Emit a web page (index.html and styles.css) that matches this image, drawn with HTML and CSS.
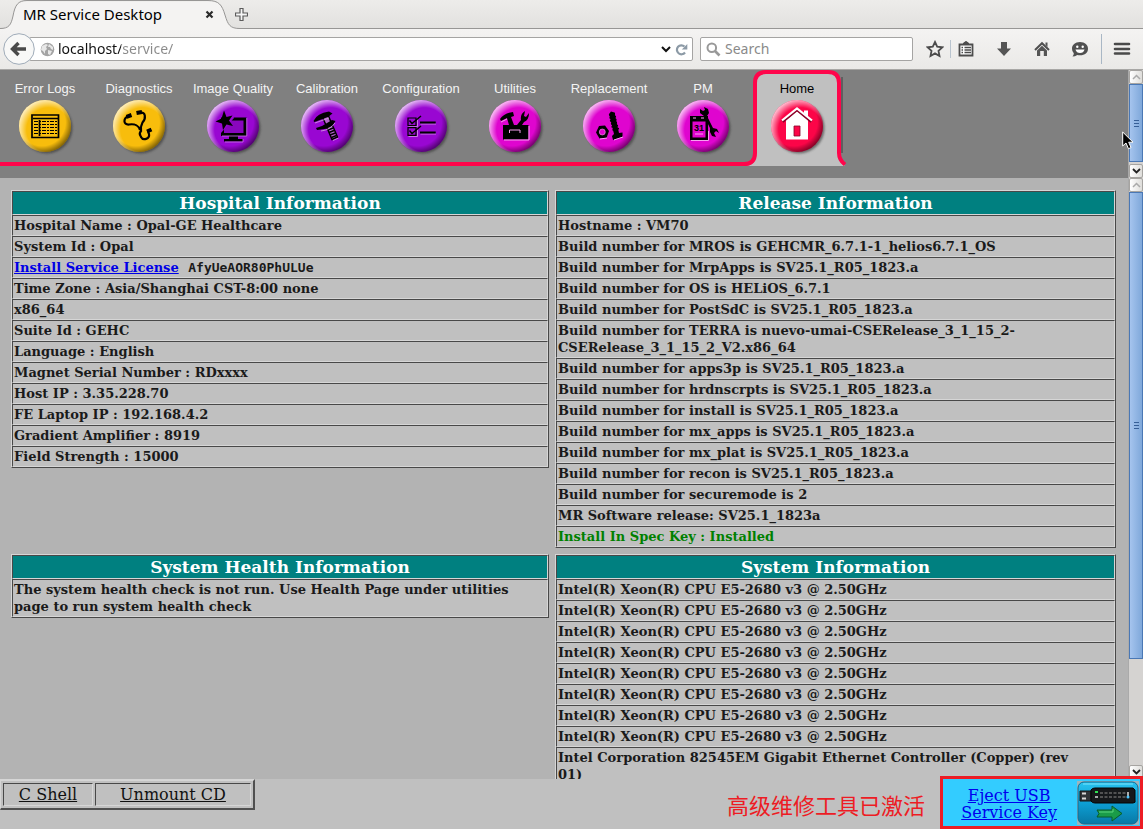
FILE: index.html
```html
<!DOCTYPE html>
<html lang="en">
<head>
<meta charset="utf-8">
<title>MR Service Desktop</title>
<link rel="stylesheet" href="styles.css">
</head>
<body>
<svg class="defs" aria-hidden="true">
  <defs>
    <radialGradient id="shine" cx="0.57" cy="0.57" r="0.64"><stop offset="0.66" stop-color="#fff" stop-opacity="0"/><stop offset="1" stop-color="#fff" stop-opacity=".95"/></radialGradient>
    <radialGradient id="shade" cx="0.44" cy="0.43" r="0.61"><stop offset="0.74" stop-color="#000" stop-opacity="0"/><stop offset="1" stop-color="#000" stop-opacity=".55"/></radialGradient>
    <filter id="soft"><feGaussianBlur stdDeviation="1.2"/></filter>
    <g id="gloss"><circle cx="30" cy="26" r="26" fill="url(#shade)"/><circle cx="30" cy="26" r="26" fill="url(#shine)"/></g>
    <circle id="drop" cx="32" cy="28" r="25.5" fill="#333" opacity=".6" filter="url(#soft)"/>
  </defs>
</svg>

<header class="tabstrip">
  <svg class="tab-shape" viewBox="0 0 240 29" aria-hidden="true"><path d="M0 28.500C9 28.500 11 25 13 16C15 5 18 1.500 27 1.500H208C219 1.500 222 5 225 15C228 25 230 28.500 240 28.500V29H0z" fill="#f4f3f2"/><path d="M0 28.500C9 28.500 11 25 13 16C15 5 18 .500 27 .500H208C219 .500 222 5 225 15C228 25 230 28.500 240 28.500" fill="none" stroke="#979695"/></svg>
  <span class="tab-title">MR Service Desktop</span>
  <button class="tab-close" aria-label="Close tab"><svg width="9" height="9" viewBox="0 0 9 9"><path d="M1.500 1.500L7.500 7.500M7.500 1.500L1.500 7.500" stroke="#2b2b2b" stroke-width="2.200"/></svg></button>
  <button class="tab-new" aria-label="New tab"><svg width="13" height="13" viewBox="0 0 13 13"><path d="M5 .500H8V5H12.500V8H8V12.500H5V8H.500V5H5z" fill="#f6f6f6" stroke="#5b5b5b" stroke-width="1.200"/></svg></button>
</header>

<div class="toolbar">
  <button class="back" aria-label="Back"><svg width="32" height="32" viewBox="0 0 32 32"><circle cx="16" cy="16" r="15.300" fill="#f8f8f7" stroke="#9fabb8"/><path d="M15.500 10L9.500 16L15.500 22M10 16H23" fill="none" stroke="#4a4a4a" stroke-width="3.400"/></svg></button>
  <div class="urlbar">
    <svg width="15" height="15" viewBox="0 0 15 15" aria-hidden="true"><circle cx="7.500" cy="7.500" r="6.800" fill="#a4a4a4"/><path d="M2 4L6 2L8 3L6 5L7 7L5 9L5 12L3 9L1 8zM9 2L13 5L13 8L11 7L10 5L8 5zM8 8L12 9L10 13L8 12z" fill="#e8e8e8"/></svg>
    <input class="url" aria-label="Address" value="localhost/service/">
    <button aria-label="History"><svg width="12" height="8" viewBox="0 0 12 8"><path d="M2 2L6 6L10 2" fill="none" stroke="#111" stroke-width="2"/></svg></button>
    <button aria-label="Reload"><svg width="13" height="13" viewBox="0 0 13 13"><path d="M10 9.500A4.500 4.500 0 1 1 9.500 3.500" fill="none" stroke="#8c9aa6" stroke-width="2.200"/><path d="M12.300 1V6.500H6.800z" fill="#8c9aa6"/></svg></button>
  </div>
  <div class="searchbar">
    <svg width="15" height="15" viewBox="0 0 15 15" aria-hidden="true"><circle cx="5.800" cy="5.800" r="4.300" fill="none" stroke="#999" stroke-width="2"/><path d="M9 9L13.500 13.500" stroke="#999" stroke-width="2.600"/></svg>
    <input class="search" aria-label="Search" placeholder="Search">
  </div>
  <div class="tools">
    <button aria-label="Bookmark"><svg width="18" height="18" viewBox="0 0 18 18"><path d="M9 2L11.200 6.700L16.300 7.300L12.500 10.800L13.500 16L9 13.400L4.500 16L5.500 10.800L1.700 7.300L6.800 6.700z" fill="none" stroke="#4c4c4c" stroke-width="1.800"/></svg></button>
    <button class="ruled" aria-label="Bookmarks list"><svg width="18" height="18" viewBox="0 0 18 18"><path d="M2.500 4.500H15.500V15.500H2.500z" fill="#fff" stroke="#4c4c4c" stroke-width="1.800"/><path d="M6.500 4V3Q9 0 11.500 3V4z" fill="#4c4c4c" stroke="#4c4c4c"/><path d="M4.500 7.500H6M4.500 10H6M4.500 12.500H6M7.500 7.500H14M7.500 10H14M7.500 12.500H14" stroke="#4c4c4c" stroke-width="1.400"/></svg></button>
    <button aria-label="Downloads"><svg width="18" height="18" viewBox="0 0 18 18"><path d="M6 2H12V8.500H16L9 16L2 8.500H6z" fill="#555"/></svg></button>
    <button aria-label="Home page"><svg width="18" height="18" viewBox="0 0 18 18"><path d="M2 10L9 3.200L16 10" fill="none" stroke="#4f4f4f" stroke-width="2"/><path d="M4 10.500L9 5.800L14 10.500V16H10.800V11H7.200V16H4zM12.500 2.500H14.500V7L12.500 5z" fill="#555"/></svg></button>
    <button aria-label="Chat"><svg width="18" height="18" viewBox="0 0 18 18"><path d="M9 2C14 2 17 5 17 8.700C17 12.500 14 15.300 9 15.300Q7.500 15.300 6.300 15Q4 16.500 1.500 16.500Q3 14.800 2.800 13.200Q1 11.500 1 8.700C1 5 4 2 9 2z" fill="#505050"/><circle cx="6.300" cy="6.700" r="1.200" fill="#fff"/><circle cx="11.700" cy="6.700" r="1.200" fill="#fff"/><path d="M4.500 9.500H13.500Q12.500 13 9 13T4.500 9.500z" fill="#fff"/></svg></button>
    <button class="menu" aria-label="Menu"><svg width="18" height="18" viewBox="0 0 18 18"><path d="M2 4H16M2 9H16M2 13.500H16" stroke="#4a4a4a" stroke-width="2.600" stroke-linecap="round"/></svg></button>
  </div>
</div>

<div class="frame nav-frame">
  <nav class="nav">
    <a class="item" href="#"><span>Error Logs</span><svg width="60" height="56" viewBox="0 0 60 56"><use href="#drop"/><circle cx="30" cy="26" r="26" fill="#f8bd0c"/><use href="#gloss"/><path d="M17 15H43.500V37.500H17zM18 18.500H43M24.500 20V36" fill="none" stroke="#000" stroke-width="1.700"/><path d="M19 21.500H42M19 24.500H42M19 27.500H42M19 30.500H42M19 33.500H42" stroke="#000" stroke-width="1.200" stroke-dasharray="4 1 2 1"/></svg></a>
    <a class="item" href="#"><span>Diagnostics</span><svg width="60" height="56" viewBox="0 0 60 56"><use href="#drop"/><circle cx="30" cy="26" r="26" fill="#f8bd0c"/><use href="#gloss"/><g fill="none" stroke="#000" stroke-width="2.200"><path d="M19.700 16C14 18 14 25 20 24.500C26 23.500 30 26 31 30M31 13C37 11 37 19 33.500 22.500Q31.500 26 32 31C29 34 32 36 32 37C34 41 41 39 40 34C39 32 39 31 42 30"/><path d="M17.500 16.800L22.500 15M27.500 13L33 12M38 31.500L42.500 29.500" stroke-width="4"/></g></svg></a>
    <a class="item" href="#"><span>Image Quality</span><svg width="60" height="56" viewBox="0 0 60 56"><use href="#drop"/><circle cx="30" cy="26" r="26" fill="#9907d2"/><use href="#gloss"/><path d="M19.500 19H42V34.500H19.500z" fill="#8906be" stroke="#000" stroke-width="3"/><path d="M13 29L28 12L31 18L18 33z" fill="#9907d2"/><path d="M21 10.500L23.500 17L29.500 15.500L26 20.500L30 26L23.500 24.500L20 30L19 23.500L12.500 21.500L18.500 18.500z"/><path d="M26 36H35V39H40V41.500H21V39H26z"/><path d="M43.800 18V36H19M40 39V42H22" fill="none" stroke="#c97be8" stroke-width=".8"/></svg></a>
    <a class="item" href="#"><span>Calibration</span><svg width="60" height="56" viewBox="0 0 60 56"><use href="#drop"/><circle cx="30" cy="26" r="26" fill="#9907d2"/><use href="#gloss"/><path d="M25.500 17L31 15L40.500 37L35 39.500z" fill="#b465cc" stroke="#000" stroke-width="1.500"/><path d="M16.500 21Q20 13 32 11.500L35.500 13.500L31 17L17.500 22zM19 28L25 26L35 20L38.500 21Q35 29 24 29.500L20 30z"/><path d="M31 30L36 28M32 32.500L37 30.500M33 35L38.500 33M34.500 37.500L39.500 35.500" stroke="#000" stroke-width="1.400"/><path d="M18 23L32 18M24 31Q33 30 38 23M41.500 38L36 40.500" stroke="#d6a1e3" stroke-width=".8" fill="none"/></svg></a>
    <a class="item" href="#"><span>Configuration</span><svg width="60" height="56" viewBox="0 0 60 56"><use href="#drop"/><circle cx="30" cy="26" r="26" fill="#9907d2"/><use href="#gloss"/><path d="M29.500 24H45M29.500 34H45M17.500 26.700H26.500V18M17.500 36.500H26.500V28" fill="none" stroke="#d597e8" stroke-width=".8"/><path d="M17 18H25V25.500H17zM17 27.700H25V35.300H17z" fill="none" stroke="#000" stroke-width="1.200"/><path d="M18.500 20.500L21 23.500L30 16M18.500 30.500L21 33.500L30 26" fill="none" stroke="#000" stroke-width="1.400"/><path d="M29 22.500H44.700M29 32.500H44.700" stroke="#000" stroke-width="2"/></svg></a>
    <a class="item" href="#"><span>Utilities</span><svg width="60" height="56" viewBox="0 0 60 56"><use href="#drop"/><circle cx="30" cy="26" r="26" fill="#df05cf"/><use href="#gloss"/><path d="M18 25H43.500V39.500H18z"/><path d="M15 19Q19 13 28 12L29 16L26 17L29 25L24 25L22 18L16 21zM32 25L36 20Q35 14 40 11L39 16L41 17L44 13Q44 20 39 22L37 25z"/><path d="M24.500 33V30H35V33M19 40H44V26M16 22L22 19" fill="none" stroke="#f6a1ef"/></svg></a>
    <a class="item" href="#"><span>Replacement</span><svg width="60" height="56" viewBox="0 0 60 56"><use href="#drop"/><circle cx="30" cy="26" r="26" fill="#df05cf"/><use href="#gloss"/><path d="M20 26L26 25.500L30 31L27.500 38L20.500 38.500L17 32.500z"/><circle cx="23.300" cy="32" r="3" fill="#df05cf" stroke="#f6a1ef" stroke-width=".6"/><path d="M30 14L32 11.500L35.500 12.500L40 33L43.500 32.500L43.500 37L34 40L33 36L35 34z"/><path d="M30 15L36 13.500M30.500 18L37 16.500M31 21L37.500 19.500M32 24L38 22.500M32.500 27L39 25.500M33.500 30L40 28.500" stroke="#000" stroke-width="1.500"/><path d="M35 40L44 37M21 39L28 38" stroke="#f6a1ef"/></svg></a>
    <a class="item" href="#"><span>PM</span><svg width="60" height="56" viewBox="0 0 60 56"><use href="#drop"/><circle cx="30" cy="26" r="26" fill="#df05cf"/><use href="#gloss"/><path d="M17 16H35V40H17zM19.500 21.500V37.500H32.500V21.500z" fill-rule="evenodd"/><path d="M20 18H23M28 18H31M22 34H30M35.500 31V40.500H18" fill="none" stroke="#f6a1ef"/><text class="date" x="21" y="31">31</text><path d="M27 9L30 11L32 10L31 7L35 9L36 13L34 16L40 28L44 29L46 33L43 31L41 33L43 37L39 36L37 32L37 28L31 16L27 13z"/></svg></a>
    <a class="item current" href="#"><svg class="tab-outline" width="96" height="96" viewBox="0 0 96 96" aria-hidden="true"><path d="M92 7V83" stroke="#5f5f5f" stroke-width="2"/><path d="M-4 96C4 95 6 90 6 84V12Q6 3 15 3H79Q89 3 89 12V84Q89 93 95 96z" fill="#c0c0c0"/><path d="M-6 94C2 94 5 90 5 83V13Q5 2 16 2H78Q89 2 89 13V83Q89 90 95 94.500" fill="none" stroke="#ff054b" stroke-width="4"/></svg><span>Home</span><svg width="60" height="56" viewBox="0 0 60 56"><use href="#drop"/><circle cx="30" cy="26" r="26" fill="#fc0548"/><use href="#gloss"/><path d="M37 17V10.500H41V21z" fill="#fff"/><path d="M19 20L30 11L41 20V39.500H19z" fill="#fff"/><path d="M15.500 21.500L30 9.500L44.500 21.500" fill="none" stroke="#8b0028" stroke-width="3"/><path d="M15 20.500L30 8.500L45 20.500" fill="none" stroke="#fff" stroke-width="2.200"/><path d="M27 26H33V36H27z" fill="#fc0548" stroke="#870329" stroke-width=".8"/></svg></a>
  </nav>
  <div class="scrollbar">
    <button aria-label="Scroll up"><svg width="9" height="6" viewBox="0 0 9 6"><path d="M1 5L4.500 1.500L8 5" fill="none" stroke="#aaa" stroke-width="1.500"/></svg></button>
    <div class="thumb thumb-nav"></div>
    <div class="trough"></div>
    <button aria-label="Scroll down"><svg width="9" height="6" viewBox="0 0 9 6"><path d="M1 1L4.500 4.500L8 1" fill="none" stroke="#222" stroke-width="1.800"/></svg></button>
  </div>
  <svg class="pointer" width="12" height="19" viewBox="0 0 12 19" aria-hidden="true"><path d="M.700 1V15L4 12L6.500 17.800L9 16.500L6.700 11.200H11z" fill="#000" stroke="#fff"/></svg>
</div>

<div class="frame main-frame">
  <main class="panels">
    <table class="info">
      <tr><th>Hospital Information</th></tr>
      <tr><td>Hospital Name : Opal-GE Healthcare</td></tr>
      <tr><td>System Id : Opal</td></tr>
      <tr><td><a href="#">Install Service License</a> <code>AfyUeAOR80PhULUe</code></td></tr>
      <tr><td>Time Zone : Asia/Shanghai CST-8:00 none</td></tr>
      <tr><td>x86_64</td></tr>
      <tr><td>Suite Id : GEHC</td></tr>
      <tr><td>Language : English</td></tr>
      <tr><td>Magnet Serial Number : RDxxxx</td></tr>
      <tr><td>Host IP : 3.35.228.70</td></tr>
      <tr><td>FE Laptop IP : 192.168.4.2</td></tr>
      <tr><td>Gradient Amplifier : 8919</td></tr>
      <tr><td>Field Strength : 15000</td></tr>
    </table>
    <table class="info">
      <tr><th>Release Information</th></tr>
      <tr><td>Hostname : VM70</td></tr>
      <tr><td>Build number for MROS is GEHCMR_6.7.1-1_helios6.7.1_OS</td></tr>
      <tr><td>Build number for MrpApps is SV25.1_R05_1823.a</td></tr>
      <tr><td>Build number for OS is HELiOS_6.7.1</td></tr>
      <tr><td>Build number for PostSdC is SV25.1_R05_1823.a</td></tr>
      <tr><td>Build number for TERRA is nuevo-umai-CSERelease_3_1_15_2-<br>CSERelease_3_1_15_2_V2.x86_64</td></tr>
      <tr><td>Build number for apps3p is SV25.1_R05_1823.a</td></tr>
      <tr><td>Build number for hrdnscrpts is SV25.1_R05_1823.a</td></tr>
      <tr><td>Build number for install is SV25.1_R05_1823.a</td></tr>
      <tr><td>Build number for mx_apps is SV25.1_R05_1823.a</td></tr>
      <tr><td>Build number for mx_plat is SV25.1_R05_1823.a</td></tr>
      <tr><td>Build number for recon is SV25.1_R05_1823.a</td></tr>
      <tr><td>Build number for securemode is 2</td></tr>
      <tr><td>MR Software release: SV25.1_1823a</td></tr>
      <tr><td class="ok">Install In Spec Key : Installed</td></tr>
    </table>
    <table class="info">
      <tr><th>System Health Information</th></tr>
      <tr><td>The system health check is not run. Use Health Page under utilities page to run system health check</td></tr>
    </table>
    <table class="info">
      <tr><th>System Information</th></tr>
      <tr><td>Intel(R) Xeon(R) CPU E5-2680 v3 @ 2.50GHz</td></tr>
      <tr><td>Intel(R) Xeon(R) CPU E5-2680 v3 @ 2.50GHz</td></tr>
      <tr><td>Intel(R) Xeon(R) CPU E5-2680 v3 @ 2.50GHz</td></tr>
      <tr><td>Intel(R) Xeon(R) CPU E5-2680 v3 @ 2.50GHz</td></tr>
      <tr><td>Intel(R) Xeon(R) CPU E5-2680 v3 @ 2.50GHz</td></tr>
      <tr><td>Intel(R) Xeon(R) CPU E5-2680 v3 @ 2.50GHz</td></tr>
      <tr><td>Intel(R) Xeon(R) CPU E5-2680 v3 @ 2.50GHz</td></tr>
      <tr><td>Intel(R) Xeon(R) CPU E5-2680 v3 @ 2.50GHz</td></tr>
      <tr><td>Intel Corporation 82545EM Gigabit Ethernet Controller (Copper) (rev<br>01)</td></tr>
    </table>
  </main>
  <div class="scrollbar">
    <button aria-label="Scroll up"><svg width="9" height="6" viewBox="0 0 9 6"><path d="M1 5L4.500 1.500L8 5" fill="none" stroke="#aaa" stroke-width="1.500"/></svg></button>
    <div class="thumb thumb-main"></div>
    <div class="trough"></div>
    <button aria-label="Scroll down"><svg width="9" height="6" viewBox="0 0 9 6"><path d="M1 1L4.500 4.500L8 1" fill="none" stroke="#222" stroke-width="1.800"/></svg></button>
  </div>
</div>

<footer class="footer">
  <div class="shell">
    <a class="shell-link" href="#">C Shell</a>
    <a class="shell-link wide" href="#">Unmount CD</a>
  </div>
  <span class="notice" lang="zh">高级维修工具已激活</span>
  <div class="eject">
    <a href="#">Eject USB<br>Service Key</a>
    <svg width="62" height="44" viewBox="0 0 62 44" aria-hidden="true">
      <defs><linearGradient id="sky" x2="0" y2="1"><stop stop-color="#29c3ef"/><stop offset=".5" stop-color="#0d9fd4"/><stop offset="1" stop-color="#0878a5"/></linearGradient></defs>
      <path d="M0 0H62V44H0z" fill="#9fb4bb"/><rect x="1" y="1" width="60" height="42" rx="6" fill="url(#sky)" stroke="#126a91"/>
      <path d="M6 3H56" stroke="#7be4fb"/>
      <path d="M3 10H14V20H3z" fill="#303438" stroke="#151515"/><path d="M5 11.500H9V13.500H5zM5 16.500H9V18.500H5z" fill="#d8d8d8"/>
      <path d="M14 9Q15 7 18 7H56L58 9V19Q59 22 56 22H18Q15 22 14 20z" fill="#16191b" stroke="#050505"/>
      <path d="M23 12H50M23 16H50" stroke="#666" stroke-width="1.300" stroke-dasharray="3 1.500"/><path d="M18 11H21" stroke="#30e050" stroke-width="2"/><path d="M18 16H21M51 11V15" stroke="#ddd" stroke-width="1.500"/><circle cx="51" cy="16" r="1.500" fill="#4ac5ff"/>
      <path d="M20 29H35V25L45 32.500L35 40V36H20L22 32.500z" fill="#1a9c48" stroke="#085c2a"/><path d="M22 31H36V28" fill="none" stroke="#5bd57c"/>
    </svg>
  </div>
</footer>
</body>
</html>
```
FILE: styles.css
```css
* { box-sizing: border-box; }
body {
  margin: 0;
  height: 100vh;
  display: flex;
  flex-direction: column;
  overflow: hidden;
  background: #c0c0c0;
  font-family: "DejaVu Serif", serif;
}
.defs { position: absolute; width: 0; height: 0; }
button { border: 0; margin: 0; padding: 0; background: none; display: flex; align-items: center; justify-content: center; }
input { border: 0; padding: 0; outline: 0; min-width: 0; flex: 1; background: none; font: 14px/20px "Noto Sans", sans-serif; }
input::placeholder { color: #8a8a8a; opacity: 1; }

.tabstrip {
  position: relative;
  flex: none;
  height: 29px;
  display: flex;
  align-items: center;
  padding-left: 23px;
  background: linear-gradient(#edecea, #e2e1df);
  border-bottom: 1px solid #979695;
  font: 15px/20px "Noto Sans", sans-serif;
}
.tab-shape { position: absolute; left: 0; top: 0; width: 240px; height: 29px; }
.tab-title { position: relative; width: 181px; }
.tab-close { position: relative; width: 10px; height: 10px; }
.tab-new { position: relative; margin-left: 21px; }

.toolbar {
  flex: none;
  height: 41px;
  display: flex;
  align-items: center;
  padding: 0 12px 0 3px;
  background: linear-gradient(#f4f3f2, #eae9e7);
  border-bottom: 1px solid #a8a7a5;
}
.back { position: relative; z-index: 1; }
.urlbar, .searchbar {
  height: 24px;
  display: flex;
  align-items: center;
  background: #fff;
  border: 1px solid #a5a4a3;
  border-radius: 2px;
}
.urlbar { flex: 1; gap: 3px; margin-left: -6px; padding: 0 4px 0 10px; }
.url {
  color: transparent;
  background: linear-gradient(90deg, #111 63px, #8a8a8a 63px);
  background-clip: text;
  -webkit-background-clip: text;
}
.searchbar { width: 213px; margin-left: 7px; padding: 0 5px; gap: 4px; }
.tools { display: flex; align-items: center; margin-left: 13px; gap: 20px; }
.tools .ruled { margin-left: -8px; }
.tools .ruled::before { content: ""; width: 1px; height: 18px; background: #b9c4cf; margin-right: 6px; margin-left: -6px; }
.tools .menu { border-left: 1px solid #a9b7c5; height: 30px; padding-left: 11px; margin-left: -8px; }

.frame { display: flex; position: relative; }
.nav-frame { flex: none; height: 108px; background: #808080; }
.main-frame { flex: 1; min-height: 0; background: #b3b3b3; overflow: hidden; }
.nav { flex: 1; display: flex; align-items: flex-start; margin-left: -2px; }
.item {
  position: relative;
  flex: none;
  width: 94px;
  height: 96px;
  padding-top: 11px;
  display: flex;
  flex-direction: column;
  align-items: center;
  gap: 3px;
  border-bottom: 4px solid #ff054b;
  color: #f4f4f4;
  font: 13px/16px "Liberation Sans", sans-serif;
  text-decoration: none;
  white-space: nowrap;
}
.item > * { position: relative; flex: none; }
.current { color: #000; border-bottom: 0; }
.item .tab-outline { position: absolute; left: 0; top: 0; overflow: visible; }
.date { font: bold 9px "Liberation Sans", sans-serif; }
.pointer { position: absolute; right: 9px; top: 61px; }

.scrollbar { flex: none; width: 15px; display: flex; flex-direction: column; background: #d5d3d1; border-left: 1px solid #aaa; }
.scrollbar button { flex: none; height: 14px; border: 1px solid #a6a4a1; border-radius: 2px; background: linear-gradient(90deg, #fff, #deddda); }
.thumb {
  flex: none;
  display: flex;
  align-items: center;
  justify-content: center;
  border: 1px solid #4a78b5;
  background: linear-gradient(90deg, #a5c4ee, #7fa8da);
}
.thumb::before { content: ""; width: 5px; height: 7px; background: repeating-linear-gradient(#375f97 0 1px, transparent 1px 3px); }
.thumb-nav { height: 78px; }
.thumb-main { height: 467px; }
.trough { flex: 1; }

.panels {
  flex: 1;
  display: grid;
  grid-template-columns: minmax(0, 538fr) minmax(0, 561fr);
  grid-template-rows: auto auto;
  align-content: start;
  align-items: start;
  gap: 6px;
  padding: 12px 12px 0 11px;
}
.info {
  width: 100%;
  border: 1px solid;
  border-color: #d6d6d6 #484848 #484848 #d6d6d6;
  border-spacing: 0;
  background: #c0c0c0;
  color: #1a1a1a;
  font: bold 13px/17px "DejaVu Serif", serif;
}
.info td, .info th { border: 1px solid; border-color: #484848 #d6d6d6 #d6d6d6 #484848; padding: 1px; }
.info th { background: #008080; color: #fff; font-size: 17px; line-height: 20px; }
.info a { color: #0000e6; }
.info code { font: bold 13px/16px "DejaVu Sans Mono", monospace; margin-left: 5px; }
.info .ok { color: #008000; }

.footer { flex: none; height: 50px; display: flex; align-items: flex-start; position: relative; }
.shell { display: flex; gap: 2px; padding: 2px; border: 2px solid; border-color: #d6d6d6 #505050 #505050 #d6d6d6; border-left-width: 1px; }
.shell-link {
  width: 90px;
  padding: 1px;
  border: 1px solid;
  border-color: #484848 #d6d6d6 #d6d6d6 #484848;
  color: #111;
  font-size: 16px;
  line-height: 19px;
  text-align: center;
}
.wide { width: 156px; }
.notice {
  align-self: center;
  margin-left: auto;
  margin-right: 15px;
  color: #ed1c24;
  font: 22px/28px "Noto Sans CJK SC", sans-serif;
}
.eject {
  align-self: flex-end;
  width: 203px;
  height: 53px;
  flex: none;
  display: flex;
  align-items: center;
  justify-content: flex-end;
  gap: 20px;
  padding-right: 1px;
  border: 3px solid #ed1c24;
  background: #33ccff;
  font-size: 16px;
  line-height: 17px;
  text-align: center;
}
.eject a { color: #0000ee; padding-top: 3px; }
```
